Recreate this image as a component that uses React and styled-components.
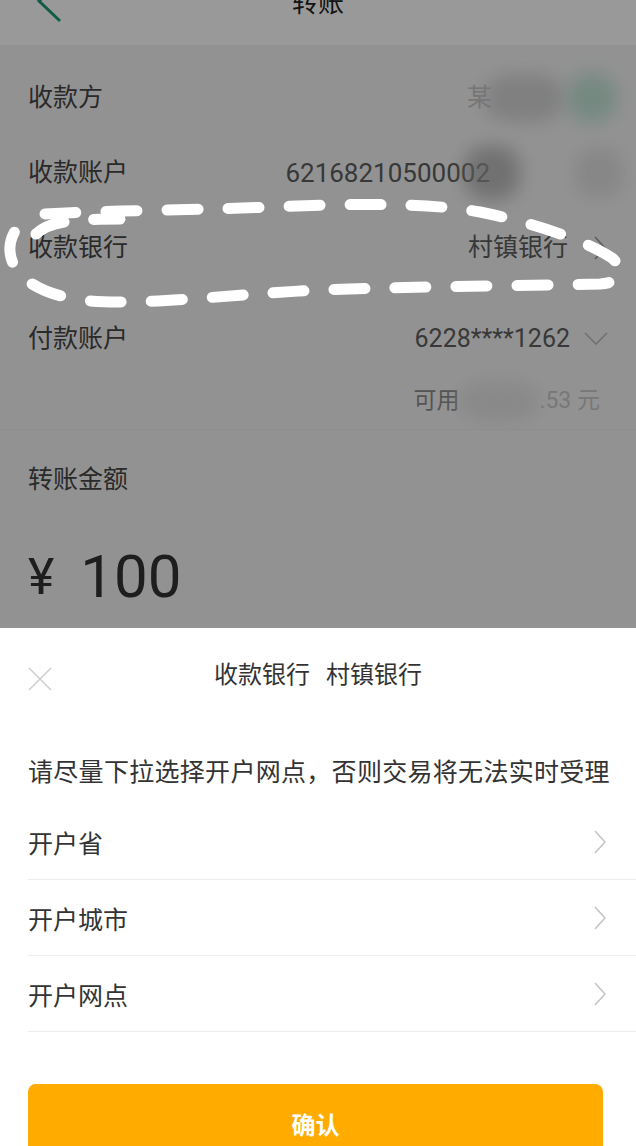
import React from 'react';
import styled, { createGlobalStyle } from 'styled-components';

const GlobalStyle = createGlobalStyle`
  html, body {
    margin: 0;
    padding: 0;
    background: #fff;
  }
  body {
    font-family: Roboto, "Noto Sans CJK SC", sans-serif;
  }
`;

const Screen = styled.div`
  position: relative;
  width: 636px;
  height: 1146px;
  overflow: hidden;
  background: #f4f4f4;
`;

const Page = styled.div`
  display: flex;
  flex-direction: column;
`;

const TopBar = styled.header`
  position: relative;
  height: 90px;
  margin-top: -45px;
  background: #fff;
  display: flex;
  align-items: center;
  justify-content: center;
`;

const BackIcon = styled.svg`
  position: absolute;
  left: 36px;
  top: 24px;
`;

const TopTitle = styled.h1`
  margin: 0;
  font-size: 26px;
  font-weight: 400;
  color: #222;
`;

const InfoList = styled.div`
  padding-top: 15px;
  display: flex;
  flex-direction: column;
`;

const InfoRow = styled.div`
  height: 75px;
  padding: 0 ${p => p.$right || 30}px 0 28px;
  display: flex;
  align-items: center;
  justify-content: space-between;
`;

const Label = styled.span`
  font-size: 25px;
  line-height: 36px;
  color: #464646;
`;

const Value = styled.span`
  display: flex;
  align-items: center;
  font-size: ${p => p.$size || 25}px;
  line-height: 36px;
  color: #5e5e5e;
`;

const Smudge = styled.span`
  display: inline-block;
  width: ${p => p.$w}px;
  height: ${p => p.$h || 40}px;
  margin-left: ${p => p.$ml || 0}px;
  border-radius: 40%;
  background: ${p => p.$color || '#bdbdbd'};
  filter: blur(9px);
  opacity: ${p => p.$op || 0.7};
`;

const Faint = styled.span`
  color: ${p => p.$color || '#9a9a9a'};
`;

const PayerBlock = styled.div`
  padding: 36px 28px 8px 28px;
  display: flex;
  flex-direction: column;
  gap: 24px;
`;

const PayerLine = styled.div`
  display: flex;
  align-items: center;
  justify-content: space-between;
`;

const BalanceLine = styled.div`
  display: flex;
  justify-content: flex-end;
  align-items: center;
  padding-right: 8px;
  font-size: 23px;
  line-height: 36px;
  color: #8c8c8c;
`;

const AmountBlock = styled.div`
  border-top: 1px solid #ececec;
  padding: 32px 28px 0;
  display: flex;
  flex-direction: column;
  gap: 44px;
`;

const Amount = styled.div`
  font-size: 60px;
  line-height: 70px;
  color: #333;
  display: flex;
  gap: 26px;
`;

const Yen = styled.span`
  font-size: 50px;
`;

const Mask = styled.div`
  position: absolute;
  inset: 0;
  background: rgba(0, 0, 0, 0.4);
`;

const Annotation = styled.svg`
  position: absolute;
  top: 0;
  left: 0;
  pointer-events: none;
`;

const Sheet = styled.section`
  position: absolute;
  left: 0;
  right: 0;
  bottom: 0;
  height: 518px;
  background: #fff;
  display: flex;
  flex-direction: column;
  overflow: hidden;

  & > * {
    flex-shrink: 0;
  }
`;

const SheetHeader = styled.div`
  position: relative;
  height: 88px;
  display: flex;
  align-items: center;
  justify-content: center;
`;

const CloseIcon = styled.svg`
  position: absolute;
  left: 28px;
  top: 39px;
`;

const SheetTitle = styled.h2`
  margin: 0;
  font-size: 24px;
  font-weight: 400;
  color: #333;
  word-spacing: 10px;
`;

const Notice = styled.p`
  margin: 39px 0 13px 28px;
  font-size: 25px;
  line-height: 36px;
  letter-spacing: 0.3px;
  color: #333;
  white-space: nowrap;
`;

const OptionRow = styled.div`
  height: 75px;
  margin-left: 28px;
  padding-right: 30px;
  border-bottom: 1px solid #ececec;
  display: flex;
  align-items: center;
  justify-content: space-between;
  font-size: 25px;
  color: #333;
`;

const Confirm = styled.button`
  margin: 52px 33px 0 28px;
  height: 78px;
  border: none;
  border-radius: 8px;
  background: #ffab00;
  color: #fff;
  font-family: "Noto Sans CJK SC", sans-serif;
  font-size: 24px;
  font-weight: 700;
`;

const Chevron = ({ color = '#c4c4c4' }) => (
  <svg width="12" height="24" viewBox="0 0 12 24">
    <polyline points="1,1 11,12 1,23" fill="none" stroke={color} strokeWidth="1.6" />
  </svg>
);

const ChevronDown = () => (
  <svg width="24" height="14" viewBox="0 0 24 14" style={{ marginLeft: 14 }}>
    <polyline points="1,1 12,12 23,1" fill="none" stroke="#bdbdbd" strokeWidth="1.6" />
  </svg>
);

const options = ['开户省', '开户城市', '开户网点'];

const loop =
  'M 36 234 C 48 222 70 219 120 219 M 45 214 C 120 210 200 210 270 207 ' +
  'C 360 203 430 203 480 212 C 530 222 585 240 612 258 C 626 270 624 282 600 284 ' +
  'C 500 286 380 287 300 291 C 220 296 140 305 90 301 C 60 298 38 290 24 278 ' +
  'C 6 262 6 240 20 224';

export default function App() {
  return (
    <>
      <GlobalStyle />
      <Screen>
        <Page>
          <TopBar>
            <BackIcon width="26" height="44" viewBox="0 0 26 44">
              <polyline points="24,2 3,22 24,42" fill="none" stroke="#1f9a77" strokeWidth="3" />
            </BackIcon>
            <TopTitle>转账</TopTitle>
          </TopBar>

          <InfoList>
            <InfoRow $right={20}>
              <Label>收款方</Label>
              <Value>
                <Faint $color="#c4c4c4">某</Faint>
                <Smudge $w={80} $h={48} $ml={-8} $color="#c8c8c8" />
                <Smudge $w={48} $h={48} $ml={4} $color="#b6e0cf" $op={0.8} />
              </Value>
            </InfoRow>
            <InfoRow $right={13}>
              <Label>收款账户</Label>
              <Value $size={26}>
                62168210500002
                <Smudge $w={56} $h={54} $ml={-26} $color="#a5a5a5" />
                <Smudge $w={48} $h={50} $ml={55} $color="#d4d4d4" $op={0.6} />
              </Value>
            </InfoRow>
            <InfoRow $right={30}>
              <Label>收款银行</Label>
              <Value>
                村镇银行
                <span style={{ width: 26 }} />
                <Chevron color="#9a9a9a" />
              </Value>
            </InfoRow>
          </InfoList>

          <PayerBlock>
            <PayerLine>
              <Label>付款账户</Label>
              <Value>
                6228****1262
                <ChevronDown />
              </Value>
            </PayerLine>
            <BalanceLine>
              可用
              <Smudge $w={80} $h={40} $color="#dedede" />
              <Faint $color="#c8c8c8">.53 元</Faint>
            </BalanceLine>
          </PayerBlock>

          <AmountBlock>
            <Label>转账金额</Label>
            <Amount>
              <Yen>¥</Yen>
              100
            </Amount>
          </AmountBlock>
        </Page>

        <Mask />

        <Annotation width="636" height="628" viewBox="0 0 636 628">
          <path
            d={loop}
            fill="none"
            stroke="#fff"
            strokeWidth="11"
            strokeLinecap="round"
            strokeDasharray="31 30"
          />
        </Annotation>

        <Sheet>
          <SheetHeader>
            <CloseIcon width="24" height="24" viewBox="0 0 24 24">
              <path d="M1 1 L23 23 M23 1 L1 23" stroke="#cfcfcf" strokeWidth="1.6" />
            </CloseIcon>
            <SheetTitle>收款银行 村镇银行</SheetTitle>
          </SheetHeader>
          <Notice>请尽量下拉选择开户网点，否则交易将无法实时受理</Notice>
          {options.map(o => (
            <OptionRow key={o}>
              <span>{o}</span>
              <Chevron />
            </OptionRow>
          ))}
          <Confirm>确认</Confirm>
        </Sheet>
      </Screen>
    </>
  );
}
